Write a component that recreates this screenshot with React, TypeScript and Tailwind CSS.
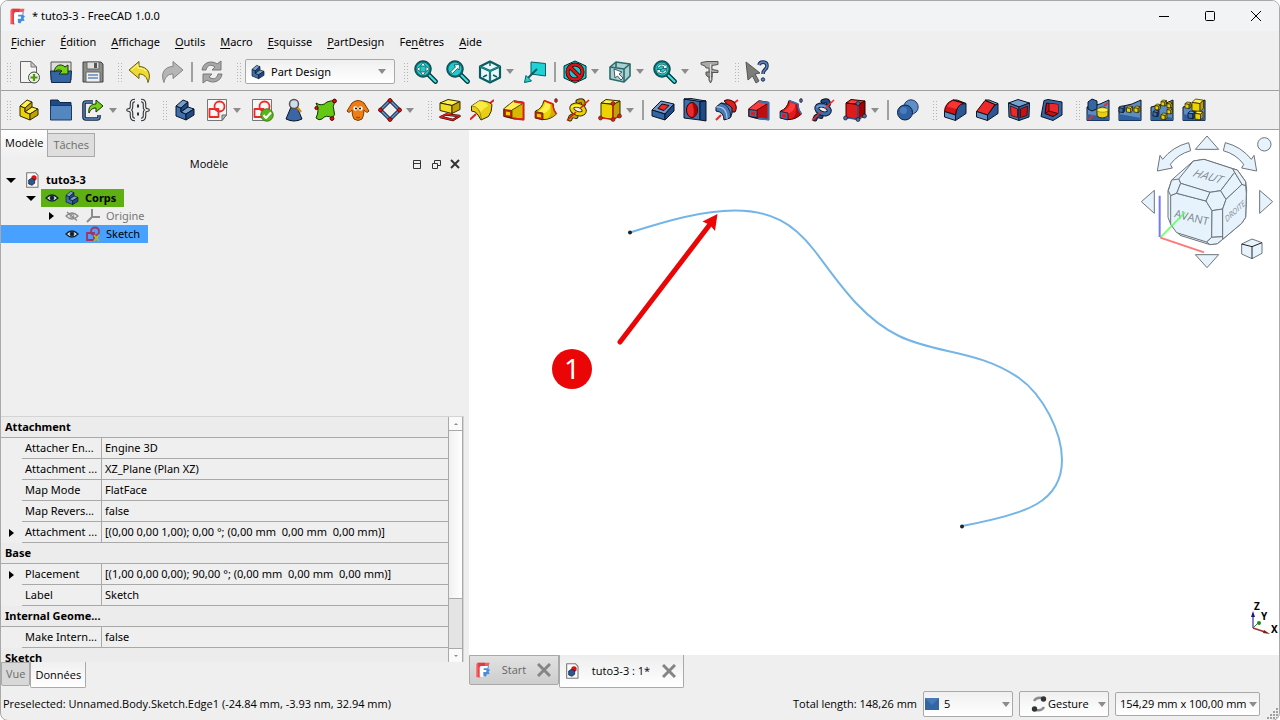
import React, { ReactNode } from "react";

type Palette = {
  light: string;
  mid: string;
  dark: string;
  line: string;
  accent: string;
};

const yellow: Palette = {
  light: "#fff04d",
  mid: "#edd400",
  dark: "#c4a000",
  line: "#302b00",
  accent: "#e01b1b",
};
const blue: Palette = {
  light: "#729fcf",
  mid: "#3d6fae",
  dark: "#204a87",
  line: "#0b1521",
  accent: "#ef2929",
};
const red: Palette = {
  light: "#ff3b3b",
  mid: "#e01b1b",
  dark: "#a40000",
  line: "#280000",
  accent: "#3d6fae",
};

const Svg = ({
  children,
  size = "w-6 h-6",
}: {
  children: ReactNode;
  size?: string;
}) => (
  <svg viewBox="0 0 24 24" className={`${size} shrink-0`} fill="none" strokeLinejoin="round" aria-hidden="true">
    {children}
  </svg>
);

/* ---------- shared shapes ---------- */

const Steps = ({ c, size }: { c: Palette; size?: string }) => (
  <Svg size={size}>
    <g stroke={c.line}>
      <path d="M3 8L8 10V14L13 16V22L3 18Z" fill={c.mid} />
      <path d="M3 8L10 2L15 4L8 10Z" fill={c.light} />
      <path d="M8 10L15 4V9L8 14Z" fill={c.dark} />
      <path d="M8 14L15 9L21 11L13 16Z" fill={c.light} />
      <path d="M13 16L21 11V17L13 22Z" fill={c.dark} />
    </g>
  </Svg>
);

const Cube = ({ x, y, s, c }: { x: number; y: number; s: number; c: Palette }) => (
  <g transform={`translate(${x} ${y}) scale(${s})`} stroke={c.line} strokeWidth={0.8 / s}>
    <path d="M0 3L3 0L10 1L7 4Z" fill={c.light} />
    <path d="M0 3L7 4V11L0 10Z" fill={c.mid} />
    <path d="M7 4L10 1V8L7 11Z" fill={c.dark} />
  </g>
);

const Sheet = () => (
  <>
    <path d="M2.500 1.500H21.500V17L17 22.500H2.500Z" fill="#f6f6f4" stroke="#777" />
    <path d="M21.500 17L17 22.500V17Z" fill="#bbb" stroke="#666" />
  </>
);

const SketchMarks = () => (
  <g stroke="#ef2929" strokeWidth="1.800">
    <circle cx="14.500" cy="8.500" r="5" />
    <rect x="4.500" y="11" width="9" height="8" />
  </g>
);

const Lens = () => (
  <>
    <path d="M14 14L21.500 21.500" stroke="#042a2a" strokeWidth="4.600" strokeLinecap="round" />
    <path d="M14 14L21.500 21.500" stroke="#34e0e2" strokeWidth="2.400" strokeLinecap="round" />
    <circle cx="9" cy="9" r="7.500" fill="#22c9cc" stroke="#0a6a70" strokeWidth="2" />
    <circle cx="9" cy="9" r="8.300" stroke="#042a2a" strokeWidth=".6" />
  </>
);

const Loft = ({ c }: { c: Palette }) => (
  <Svg>
    <path d="M2 11L12 3L21.500 4.500V21.500L9 20L2 18Z" fill={c.mid} stroke={c.line} strokeWidth="1.400" />
    <path d="M2 11L12 3L21.500 4.500L10 12Z" fill={c.light} />
    <path d="M10 12L20 6V20L10 19Z" fill={c.dark} opacity=".55" />
    <path d="M12 3.500L21.500 5V21.500L11 20.500" stroke={c.accent} strokeWidth="1.800" />
    <path d="M10 12L20 6" stroke={c.line} strokeWidth=".8" />
    <path d="M2 11.500L10 12.500V19.500L2 18.500Z" fill={c.accent} stroke={c.line} strokeWidth=".7" />
    <path d="M4 13.600L8 14.200V17.500L4 17Z" fill={c.mid} />
  </Svg>
);

const Pipe = ({ c }: { c: Palette }) => (
  <Svg>
    <path d="M1.500 13Q8 11 10 2.500L19 6Q19 12 22.500 16Q16 22 9 21.500L1.500 20Z" fill={c.mid} stroke={c.line} />
    <path d="M13 21Q19 16 16 6L19 6Q19 12 22.500 16Q18 20 13 21Z" fill={c.dark} opacity=".7" />
    <path d="M4 13.500Q10 11 11.500 4.500L16.500 6.500Q16 13 9 16Z" fill={c.light} />
    <path d="M10 2.500L19 6Q19 12 22.500 16" stroke={c.accent} strokeWidth="1.500" />
    <path d="M1 13.500L9 15V22L1 20Z" fill={c.accent} stroke={c.line} strokeWidth=".7" />
    <path d="M3 15.800L7 16.600V19.600L3 18.700Z" fill={c.mid} />
    <ellipse cx="22" cy="2.500" rx="1.400" ry="2" fill={c.accent} stroke={c.line} strokeWidth=".6" />
  </Svg>
);

const Helix = ({ c, axis }: { c: Palette; axis: string }) => (
  <Svg>
    <g strokeLinecap="round">
      <path d="M12 3.500Q17 1 17.500 6M4 21Q5 16.500 10 18.500" stroke={c.line} strokeWidth="5" />
      <path d="M12 3.500Q17 1 17.500 6M4 21Q5 16.500 10 18.500" stroke={c.dark} strokeWidth="3" />
      <ellipse cx="12" cy="11.500" rx="6.500" ry="4" transform="rotate(20 12 11.500)" stroke={c.line} strokeWidth="5" />
      <ellipse cx="12" cy="11.500" rx="6.500" ry="4" transform="rotate(20 12 11.500)" stroke={c.mid} strokeWidth="3.200" />
      <path d="M6 9Q10 6.500 15 9" stroke={c.light} strokeWidth="1.500" />
    </g>
    <path d="M1 22.500L10 14M14 10.500L23 2" stroke={axis} strokeWidth="1.600" />
  </Svg>
);

const Primitive = ({ c }: { c: Palette }) => (
  <Svg>
    <path d="M3 5L8 1.500L22 3L17 6.500Z" fill={c.light} stroke={c.line} />
    <path d="M3 5L15 6.500V21.500L3 19.500Z" fill={c.mid} stroke={c.line} />
    <path d="M15 6.500L22 3V18L15 21.500Z" fill={c.dark} stroke={c.line} />
    <path d="M3 20L15 21.500L21 18M15 21.500V6" stroke={c.accent} strokeWidth="1.200" />
    <g fill={c.accent} stroke={c.line} strokeWidth=".6">
      <circle cx="2.500" cy="20" r="2" />
      <circle cx="15" cy="21.500" r="2" />
      <circle cx="21.500" cy="18" r="2" />
      <circle cx="15" cy="5.500" r="2" />
    </g>
  </Svg>
);

const Ramp = ({ children }: { children: ReactNode }) => (
  <Svg>
    <path d="M1 9L14 6L23 2V22.500H1Z" fill="#5b8cc4" stroke="#0b1521" />
    <path d="M1 16L23 20V22.500H1Z" fill="#2f5f9e" />
    {children}
  </Svg>
);

/* ---------- icons ---------- */

const FreeCadLogo = ({ size = "w-4 h-4" }: { size?: string }) => (
  <Svg size={size}>
    <path d="M12 8L21 6L20 10L22.500 11.500L20.500 14.500L22 18L18 18.500L16 22L11 20Z" fill="#418fde" />
    <path d="M4 1H22L20.500 6H8V23H2V4Q2 2 4 1Z" fill="#ff585d" />
    <path d="M4 1H15V6H8V23H5V4Q5 2 4 1Z" fill="#cb333b" opacity=".7" />
    <path d="M9 6H19V9.500H13V12H17V15H12.500V22H7V8Z" fill="#fff" />
  </Svg>
);

const DocIcon = ({ size = "w-4 h-4" }: { size?: string }) => (
  <Svg size={size}>
    <path d="M4 1H17L21 5V23H4Z" fill="#fafafa" stroke="#777" strokeWidth="1.600" />
    <circle cx="15" cy="9" r="4" fill="#dd1111" />
    <path d="M7 12L11 9.500L16 11.500V17L12 20L7 18Z" fill="#2c5796" stroke="#0b1521" />
  </Svg>
);

const NewIcon = () => (
  <Svg>
    <path d="M3.500 1.500H14L19.500 7V22.500H3.500Z" fill="#f3f3f1" stroke="#666" />
    <path d="M14 1.500V7H19.500Z" fill="#ccc" stroke="#777" />
    <circle cx="17" cy="17.500" r="5.500" fill="#eee" stroke="#444" />
    <path d="M17 14V21M13.500 17.500H20.500" stroke="#4e9a06" strokeWidth="2.200" />
  </Svg>
);

const OpenIcon = () => (
  <Svg>
    <path d="M2 2H22V20H2Z" fill="#ddd" stroke="#555" />
    <path d="M1.500 11H22.500L21.500 22.500H2.500Z" fill="#3465a4" stroke="#102a4c" />
    <path d="M5 12C6 5 12 3 16 7L19 5V14H10L13 11C10 9 8 10 5 12Z" fill="#73d216" stroke="#173004" />
  </Svg>
);

const SaveIcon = () => (
  <Svg>
    <path d="M2 2H20L22 4V22H2Z" fill="#8b8d89" stroke="#3f403e" />
    <path d="M6 2H18V9H6Z" fill="#e0e0de" stroke="#666" />
    <path d="M13 3H16V8H13Z" fill="#555" />
    <path d="M5 12H19V22H5Z" fill="#f0f0f0" stroke="#666" />
    <path d="M7 15H17M7 18H17" stroke="#5d88c0" strokeWidth="1.400" />
  </Svg>
);

const UndoIcon = () => (
  <Svg>
    <path d="M1 10L11 1.500V6.500C19 6.500 24 13 20 22.500C19 17 16 14 11 14V18.500Z" fill="#f0d932" stroke="#6a5c00" />
    <path d="M3.500 10L10 4.500V8Q15 8 18 11" stroke="#fff8a0" />
  </Svg>
);

const RedoIcon = () => (
  <Svg>
    <path d="M23 10L13 1.500V6.500C5 6.500 0 13 4 22.500C5 17 8 14 13 14V18.500Z" fill="#b5b5b5" stroke="#858585" />
  </Svg>
);

const RefreshIcon = () => (
  <Svg>
    <g fill="#a8a8a8" stroke="#777">
      <path d="M2 10C3 2 12 0 17 4L21 1V10H12L15 7C11 4 7 5 6 10Z" />
      <path d="M22 14C21 22 12 24 7 20L3 23V14H12L9 17C13 20 17 19 18 14Z" />
    </g>
  </Svg>
);

const FitAllIcon = () => (
  <Svg>
    <Lens />
    <path d="M9 2.500L11.500 6H6.500ZM9 15.500L11.500 12H6.500ZM2.500 9L6 6.500V11.500ZM15.500 9L12 6.500V11.500Z" fill="#fff" stroke="#0b3a3c" strokeWidth=".7" />
  </Svg>
);

const FitSelectionIcon = () => (
  <Svg>
    <Lens />
    <path d="M4.500 12L9.500 7L8 5L13.500 4.500L13 10L11.500 8.500L6.500 13.500Z" fill="#fff" stroke="#0b3a3c" strokeWidth=".7" />
  </Svg>
);

const IsoIcon = () => (
  <Svg>
    <path d="M12 1.500L22 6.500V17.500L12 22.500L2 17.500V6.500Z" fill="#e8f7f7" stroke="#0a5c61" strokeWidth="2.200" />
    <path d="M2 6.500L12 11L22 6.500M12 11V22" stroke="#0a5c61" strokeWidth="2.200" />
    <path d="M2 6.500L12 11L22 6.500M12 11V22" stroke="#25b6ba" strokeWidth=".7" />
    <path d="M12 2V6M5 17L9 15M19 17L15 15" stroke="#0a5c61" strokeWidth="1.400" />
  </Svg>
);

const LinkViewIcon = () => (
  <Svg>
    <path d="M8 2L22.500 3.500V16L8 14Z" fill="#1ed3d6" stroke="#0a5c61" />
    <path d="M14 9L5 18" stroke="#0a5c61" strokeWidth="2" />
    <path d="M1.500 22.500L3 15.500L8.500 21Z" fill="#1ed3d6" stroke="#0a5c61" />
  </Svg>
);

const DrawStyleIcon = () => (
  <Svg>
    <path d="M12 1L23 6V18L12 23L1 18V6Z" fill="#16c6ca" stroke="#042a2a" />
    <circle cx="12" cy="12" r="7.500" stroke="#280000" strokeWidth="4" />
    <path d="M7 7L17 17" stroke="#280000" strokeWidth="4" />
    <circle cx="12" cy="12" r="7.500" stroke="#d81414" strokeWidth="2.600" />
    <path d="M7 7L17 17" stroke="#d81414" strokeWidth="2.600" />
  </Svg>
);

const BoxSelectIcon = () => (
  <Svg>
    <path d="M2 7L8 2L22 4V16L16 22L2 19Z" fill="#a8d0d0" stroke="#2b6a6a" strokeWidth="1.600" />
    <path d="M2 7L16 9L22 4M16 9V22M8 2V7" stroke="#2b6a6a" strokeWidth="1.600" />
    <path d="M6 9L14 12L11 14L15 18L13 20L9.500 16L7 18Z" fill="#fff" stroke="#234" strokeWidth=".8" />
  </Svg>
);

const SyncViewIcon = () => (
  <Svg>
    <Lens />
    <path d="M4 8C5 4 10 3 12 5.500L14 4V8.500H9.500L11 7C8 5 7 6 6 8ZM14 10C13 14 8 15 6 12.500L4 14V9.500H8.500L7 11C10 13 11 12 12 10Z" fill="#e0fafa" stroke="#0b3a3c" strokeWidth=".7" />
  </Svg>
);

const MeasureIcon = () => (
  <Svg>
    <path d="M3 2.500L9 1.500H20V4.500L14 5.500V9.500L20 10.500V12.500H14V20L12.500 23L11 20V8H8L7 6L3 4.500Z" fill="#a9aba6" stroke="#555" />
    <path d="M8 12H14V17H10L8 15Z" fill="#8b8d89" stroke="#555" />
    <path d="M12.500 4V20" stroke="#ddd" />
  </Svg>
);

const WhatsThisIcon = () => (
  <Svg>
    <path d="M1 2L15 13L10 14L14 21L11 23L7.500 16L3 20Z" fill="#7b7d79" stroke="#555" />
    <path d="M14 5C15 1 22 1 22 6C22 10 18 9 18 14" stroke="#1c2f52" strokeWidth="3.600" />
    <path d="M14 5C15 1 22 1 22 6C22 10 18 9 18 14" stroke="#5f83ba" strokeWidth="1.600" />
    <circle cx="18" cy="19.500" r="1.700" fill="#5f83ba" stroke="#1c2f52" />
  </Svg>
);

const GroupIcon = () => (
  <Svg>
    <path d="M1.500 2H9L11 4.500H22V9H1.500Z" fill="#204a87" stroke="#102a4c" />
    <path d="M1.500 7.500H22.500V22H1.500Z" fill="#5486c0" stroke="#183a69" />
  </Svg>
);

const LinkIcon = () => (
  <Svg>
    <path d="M12 4H5Q3 4 3 6V19Q3 21 5 21H16Q18 21 18 19V17" stroke="#122438" strokeWidth="3.600" />
    <path d="M12 4H5Q3 4 3 6V19Q3 21 5 21H16Q18 21 18 19V17" stroke="#5a87bd" strokeWidth="1.400" />
    <path d="M8 15C7 9 10 6 15 6V2L22 8L15 14V10C12 10 10 11 8 15Z" fill="#73d216" stroke="#173004" />
  </Svg>
);

const VarSetIcon = () => (
  <Svg>
    <g stroke="#2e3436" strokeWidth="3.600">
      <path d="M9 2.500Q5.500 2.500 5.500 6V9Q5.500 12 2 12Q5.500 12 5.500 15V18Q5.500 21.500 9 21.500" />
      <path d="M15 2.500Q18.500 2.500 18.500 6V9Q18.500 12 22 12Q18.500 12 18.500 15V18Q18.500 21.500 15 21.500" />
    </g>
    <g stroke="#eee" strokeWidth="1.400">
      <path d="M9 2.500Q5.500 2.500 5.500 6V9Q5.500 12 2 12Q5.500 12 5.500 15V18Q5.500 21.500 9 21.500" />
      <path d="M15 2.500Q18.500 2.500 18.500 6V9Q18.500 12 22 12Q18.500 12 18.500 15V18Q18.500 21.500 15 21.500" />
    </g>
    <path d="M12 6.500V9.500M12 14.500V17.500" stroke="#2e3436" strokeWidth="2" />
  </Svg>
);

const NewSketchIcon = () => (
  <Svg>
    <Sheet />
    <SketchMarks />
  </Svg>
);

const ValidateSketchIcon = () => (
  <Svg>
    <Sheet />
    <SketchMarks />
    <circle cx="17" cy="17" r="6.200" fill="#5ab51c" stroke="#3b7d0d" />
    <path d="M13.500 17L16 20L21 14.500" stroke="#fff" strokeWidth="2" />
  </Svg>
);

const CheckGeometryIcon = () => (
  <Svg>
    <path d="M9 9H15L20 21Q12 25 4 21Z" fill="#3a66a3" stroke="#0b1521" />
    <path d="M15 9L19 14" stroke="#d08a10" strokeWidth="2.200" />
    <circle cx="12" cy="6" r="4.500" fill="#cfdcea" stroke="#555" strokeWidth="1.500" />
  </Svg>
);

const BinderIcon = () => (
  <Svg>
    <path d="M2 5Q8 9 13 4Q18 2 21 3Q18 9 20 13Q22 17 18 20Q12 16 8 21Q5 23 2 20Q6 12 2 5Z" fill="#62c812" stroke="#173004" />
    <g fill="#d81414" stroke="#500">
      <circle cx="2.500" cy="10" r="1.600" />
      <circle cx="20.500" cy="3" r="1.900" />
      <circle cx="18" cy="20.500" r="1.900" />
    </g>
  </Svg>
);

const CloneIcon = () => (
  <Svg>
    <path d="M6 5Q12 0 18 5L23 13Q21 16 18 12Q18 18 16 21Q12 24 8 21Q6 18 6 12Q3 16 1 13Z" fill="#f07d14" stroke="#7a3c02" />
    <circle cx="9.500" cy="10.500" r="2.200" fill="#fff" />
    <circle cx="14.500" cy="10.500" r="2.200" fill="#fff" />
    <circle cx="10" cy="10.500" r="1" fill="#000" />
    <circle cx="14" cy="10.500" r="1" fill="#000" />
    <path d="M10 19Q12 21 14 19" stroke="#7a3c02" />
  </Svg>
);

const DatumIcon = () => (
  <Svg>
    <path d="M12 2.500L21.500 12L12 21.500L2.500 12Z" stroke="#0b1521" strokeWidth="3.600" />
    <path d="M12 2.500L21.500 12L12 21.500L2.500 12Z" stroke="#5a8ac4" strokeWidth="2" />
    <g fill="#d81414" stroke="#500" strokeWidth=".7">
      <circle cx="12" cy="2.500" r="2" />
      <circle cx="21.500" cy="12" r="2" />
      <circle cx="12" cy="21.500" r="2" />
      <circle cx="2.500" cy="12" r="2" />
    </g>
  </Svg>
);

const PadIcon = () => (
  <Svg>
    <path d="M2.500 19L8 16.500L21.500 18L15 22Z" stroke="#280000" strokeWidth="2.400" />
    <path d="M2.500 19L8 16.500L21.500 18L15 22Z" stroke="#e01b1b" strokeWidth="1.400" />
    <path d="M2 5L10 1.500L22 3.500L14 7.500Z" fill="#fff04d" stroke="#302b00" />
    <path d="M2 5L14 7.500V15.500L2 12.500Z" fill="#f3dc24" stroke="#302b00" />
    <path d="M14 7.500L22 3.500V11.500L14 15.500Z" fill="#c4a000" stroke="#302b00" />
  </Svg>
);

const RevolutionIcon = () => (
  <Svg>
    <path d="M0 21.500L6 16M19 6L24 2" stroke="#e01b1b" strokeWidth="2" />
    <path d="M1.500 8L9 3Q17 2 22 6.500Q22 14 18.500 18.500L11 22L8 17Q6 13 1.500 13Z" fill="#e8cf15" stroke="#302b00" />
    <path d="M1.500 8L9 3Q15 3 18.500 8Q15 9 11 14Q8 9 1.500 8Z" fill="#fff04d" opacity=".8" />
    <path d="M1.500 8Q10 8 11.500 21.500" stroke="#8a7600" strokeWidth=".8" />
  </Svg>
);

const PocketIcon = () => (
  <Svg>
    <path d="M1 12L10 3L23 6L14 16Z" fill="#6b98cd" stroke="#0b1521" />
    <path d="M1 12L14 16V22L1 18Z" fill="#3465a4" stroke="#0b1521" />
    <path d="M14 16L23 6V13L14 22Z" fill="#204a87" stroke="#0b1521" />
    <path d="M7 10.500L11 6L18 7.500L13 12.500Z" fill="#ef2929" stroke="#280000" />
  </Svg>
);

const HoleIcon = () => (
  <Svg>
    <path d="M1 1L17 3V22L1 20Z" fill="#3f70ae" stroke="#0b1521" />
    <path d="M1 1L8 0.500L23 3L17 3.500Z" fill="#729fcf" stroke="#0b1521" />
    <path d="M17 3.500L23 3V23L17 22Z" fill="#204a87" stroke="#0b1521" />
    <ellipse cx="9" cy="12" rx="5.500" ry="7.500" fill="#ef2929" stroke="#280000" />
    <path d="M9 4.500Q14.500 5 14.500 12Q14 18 10 19.500Q12 12 9 4.500Z" fill="#a40000" />
  </Svg>
);

const GrooveIcon = () => (
  <Svg>
    <path d="M1 22L6 17M19 5L23 2" stroke="#ef2929" strokeWidth="2" />
    <path d="M9 3Q13 0 19 4Q23 9 20 14L15 14Q16 8 9 3Z" fill="#e01b1b" stroke="#280000" />
    <path d="M1 9L6 5Q13 5 17 10Q18 16 15 20L9 22Q9 14 1 13Z" fill="#4a7ab5" stroke="#0b1521" />
    <path d="M1 9Q12 8 12 21" stroke="#a9c6e8" strokeWidth="1.200" />
    <path d="M6 5Q15 7 16 19" stroke="#0b1521" strokeWidth=".8" />
  </Svg>
);

const BooleanIcon = () => (
  <Svg>
    <circle cx="15" cy="9" r="7.200" fill="#5f8fc6" stroke="#1b3c68" />
    <circle cx="9" cy="14.500" r="7.500" fill="#2f62a3" stroke="#0b1f3a" />
    <circle cx="7.500" cy="12.500" r="3.500" fill="#4a7dbb" />
  </Svg>
);

const FilletIcon = () => (
  <Svg>
    <path d="M12.500 17Q13 8 20 5L23 5.500V15.500L12.500 22.500Z" fill="#2c5796" stroke="#0b1521" />
    <path d="M10 2H14L23 5.500L20 6Z" fill="#729fcf" stroke="#0b1521" />
    <path d="M1.500 13.500Q2 5 10 2L20.500 5Q13 8 12.500 17Z" fill="#d41414" stroke="#280000" />
    <path d="M4 8.500Q6 4.500 10 3L19 5.500Q15 7 13.500 11Z" fill="#ff3b3b" opacity=".8" />
    <path d="M1.500 13.500L12.500 17V22.500L1.500 19Z" fill="#5f8fc6" stroke="#0b1521" />
  </Svg>
);

const ChamferIcon = () => (
  <Svg>
    <path d="M12.500 17L20 7L23 5.500V15.500L12.500 22.500Z" fill="#2c5796" stroke="#0b1521" />
    <path d="M10 2H14L23 5.500L20 7Z" fill="#729fcf" stroke="#0b1521" />
    <path d="M1.500 13.500L10 2.500L20 6.500L12.500 17Z" fill="#ef2929" stroke="#280000" />
    <path d="M1.500 13.500L12.500 17V22.500L1.500 19Z" fill="#5f8fc6" stroke="#0b1521" />
  </Svg>
);

const DraftIcon = () => (
  <Svg>
    <path d="M1.500 5L11 1.500L22.500 5L12 9Z" fill="#729fcf" stroke="#0b1521" />
    <path d="M1.500 5L12 9V22.500L2 19Z" fill="#4a7ab5" stroke="#0b1521" />
    <path d="M12 9L22.500 5L22 19L12 22.500Z" fill="#3465a4" stroke="#0b1521" />
    <path d="M3.500 8L10.500 11V19.500L4 17.500Z" fill="#ef2929" stroke="#280000" strokeWidth=".7" />
    <path d="M13.500 11L20.500 8L20 17.500L13.500 19.500Z" fill="#c41212" stroke="#280000" strokeWidth=".7" />
  </Svg>
);

const ThicknessIcon = () => (
  <Svg>
    <path d="M5 2.500L9 1.500L23 4V17L14 22.500L2 18.500Z" fill="#3465a4" stroke="#0b1521" />
    <path d="M7.500 5L19 6.500V15.500L14 18.500L6 15.500Z" fill="#c41212" stroke="#280000" />
    <path d="M10 5.500L19 6.500V15.500L10 13Z" fill="#ef2929" />
    <path d="M10 5.500V13L19 15.500M10 13L6 15.500" stroke="#280000" strokeWidth=".8" />
  </Svg>
);

const MirroredIcon = () => (
  <Ramp>
    <path d="M2 4L6 1L11 3V11L6 13L2 11Z" fill="#3465a4" stroke="#0b1521" />
    <path d="M3 22L7 17M18 8L22 5" stroke="#ef2929" strokeWidth="2" />
    <path d="M11 12Q16 6 22 12V18Q16 22 11 18Z" fill="#e8cf15" stroke="#302b00" />
    <ellipse cx="16.500" cy="12" rx="5.500" ry="2.200" fill="#fff04d" stroke="#8a7600" strokeWidth=".6" />
  </Ramp>
);

const LinearPatternIcon = () => (
  <Ramp>
    <Cube x={1} y={8} s={0.6} c={blue} />
    <Cube x={8.500} y={8} s={0.6} c={yellow} />
    <Cube x={16} y={8} s={0.6} c={yellow} />
  </Ramp>
);

const PolarPatternIcon = () => (
  <Ramp>
    <Cube x={3} y={12} s={0.6} c={blue} />
    <Cube x={5} y={6} s={0.55} c={yellow} />
    <Cube x={11} y={2} s={0.55} c={yellow} />
    <Cube x={17} y={4} s={0.55} c={yellow} />
    <Cube x={17} y={10} s={0.55} c={yellow} />
    <Cube x={11} y={15} s={0.6} c={yellow} />
  </Ramp>
);

const MultiTransformIcon = () => (
  <Ramp>
    <Cube x={10} y={1} s={1.150} c={yellow} />
    <Cube x={3} y={4} s={0.6} c={yellow} />
    <Cube x={6} y={13} s={0.7} c={blue} />
    <Cube x={13} y={13} s={0.8} c={yellow} />
  </Ramp>
);

/* ---------- toolbar parts ---------- */

const Grip = () => (
  <span className="ml-2 mr-px w-1.5 h-5 shrink-0 bg-[radial-gradient(#b4b4b4_35%,transparent_40%)] bg-size-[3px_3px]" />
);

const Separator = () => (
  <span className="mx-[3px] w-0.5 h-5 shrink-0 bg-[#a0a0a0]" />
);

const Arrow = () => (
  <span className="block w-0 h-0 border-x-4 border-x-transparent border-t-[5px] border-t-[#8c8c8c]" />
);

const Tool = ({
  label,
  menu,
  children,
}: {
  label: string;
  menu?: boolean;
  children: ReactNode;
}) => (
  <>
    <button type="button" aria-label={label} className="w-8 h-8 shrink-0 grid place-items-center">
      {children}
    </button>
    {menu && (
      <button type="button" aria-label={`${label} menu`} className="w-[13px] h-8 shrink-0 flex items-center">
        <Arrow />
      </button>
    )}
  </>
);

const menus = [
  ["", "F", "ichier"],
  ["", "É", "dition"],
  ["", "A", "ffichage"],
  ["", "O", "utils"],
  ["", "M", "acro"],
  ["", "E", "squisse"],
  ["", "P", "artDesign"],
  ["Fe", "n", "êtres"],
  ["", "A", "ide"],
];

const TitleBar = () => (
  <header className="flex items-center h-[30px] pl-2 bg-[#f2f3f5]">
    <FreeCadLogo size="w-[17px] h-[17px]" />
    <h1 className="ml-1.5 grow">* tuto3-3 - FreeCAD 1.0.0</h1>
    <div className="flex text-black">
      <button type="button" aria-label="Réduire" className="w-[46px] h-7 grid place-items-center">
        <svg viewBox="0 0 12 12" className="w-3 h-3" stroke="currentColor">
          <path d="M1 6.500H11" />
        </svg>
      </button>
      <button type="button" aria-label="Agrandir" className="w-[46px] h-7 grid place-items-center">
        <svg viewBox="0 0 12 12" className="w-3 h-3" stroke="currentColor" fill="none">
          <rect x="1.500" y="1.500" width="9" height="9" rx="1" />
        </svg>
      </button>
      <button type="button" aria-label="Fermer" className="w-[46px] h-7 grid place-items-center">
        <svg viewBox="0 0 12 12" className="w-3 h-3" stroke="currentColor">
          <path d="M1 1L11 11M11 1L1 11" />
        </svg>
      </button>
    </div>
  </header>
);

const MenuBar = () => (
  <nav className="h-[22px] flex items-center gap-[15px] pl-2.5">
    {menus.map(([before, key, after]) => (
      <a key={before + key + after} href="#">
        {before}
        <span className="underline underline-offset-2">{key}</span>
        {after}
      </a>
    ))}
  </nav>
);

const MainToolbar = () => (
  <div className="h-[38px] flex items-center -ml-[3px] border-b border-[#a0a0a0]">
    <Grip />
    <Tool label="Nouveau"><NewIcon /></Tool>
    <Tool label="Ouvrir"><OpenIcon /></Tool>
    <Tool label="Enregistrer"><SaveIcon /></Tool>
    <Grip />
    <Tool label="Annuler"><UndoIcon /></Tool>
    <Tool label="Rétablir"><RedoIcon /></Tool>
    <Separator />
    <Tool label="Rafraîchir"><RefreshIcon /></Tool>
    <Grip />
    <div className="relative ml-0.5 flex items-center w-[150px] h-[25px] pl-1 rounded-xs border border-[#a9a9a9] bg-linear-to-b from-[#f0f0f0] to-white">
      <Steps c={blue} size="w-4 h-4" />
      <select aria-label="Atelier" className="grow h-full pl-[5px] appearance-none bg-transparent">
        <option>Part Design</option>
      </select>
      <span className="absolute right-2 pointer-events-none">
        <Arrow />
      </span>
    </div>
    <Grip />
    <Tool label="Tout afficher"><FitAllIcon /></Tool>
    <Tool label="Zoom sur la sélection"><FitSelectionIcon /></Tool>
    <Tool label="Vue isométrique" menu><IsoIcon /></Tool>
    <Tool label="Aller à l'objet lié"><LinkViewIcon /></Tool>
    <Separator />
    <Tool label="Style de représentation" menu><DrawStyleIcon /></Tool>
    <Tool label="Sélection" menu><BoxSelectIcon /></Tool>
    <Tool label="Synchroniser la vue" menu><SyncViewIcon /></Tool>
    <Tool label="Mesurer"><MeasureIcon /></Tool>
    <Grip />
    <Tool label="Qu'est-ce que c'est ?"><WhatsThisIcon /></Tool>
  </div>
);

const PartDesignToolbar = () => (
  <div className="h-[39px] flex items-center -ml-[3px] border-b border-[#a0a0a0]">
    <Grip />
    <Tool label="Pièce"><Steps c={yellow} /></Tool>
    <Tool label="Groupe"><GroupIcon /></Tool>
    <Tool label="Lien" menu><LinkIcon /></Tool>
    <Tool label="Variables"><VarSetIcon /></Tool>
    <Grip />
    <Tool label="Corps"><Steps c={blue} /></Tool>
    <Tool label="Nouvelle esquisse" menu><NewSketchIcon /></Tool>
    <Tool label="Valider l'esquisse"><ValidateSketchIcon /></Tool>
    <Tool label="Vérifier la géométrie"><CheckGeometryIcon /></Tool>
    <Tool label="Forme liée"><BinderIcon /></Tool>
    <Tool label="Clone"><CloneIcon /></Tool>
    <Tool label="Référence" menu><DatumIcon /></Tool>
    <Grip />
    <Tool label="Protrusion"><PadIcon /></Tool>
    <Tool label="Révolution"><RevolutionIcon /></Tool>
    <Tool label="Lissage additif"><Loft c={yellow} /></Tool>
    <Tool label="Balayage additif"><Pipe c={yellow} /></Tool>
    <Tool label="Hélice additive"><Helix c={yellow} axis="#e01b1b" /></Tool>
    <Tool label="Primitive additive" menu><Primitive c={yellow} /></Tool>
    <Separator />
    <Tool label="Cavité"><PocketIcon /></Tool>
    <Tool label="Perçage"><HoleIcon /></Tool>
    <Tool label="Rainure"><GrooveIcon /></Tool>
    <Tool label="Lissage soustractif"><Loft c={red} /></Tool>
    <Tool label="Balayage soustractif"><Pipe c={red} /></Tool>
    <Tool label="Hélice soustractive"><Helix c={blue} axis="#ef2929" /></Tool>
    <Tool label="Primitive soustractive" menu><Primitive c={red} /></Tool>
    <Separator />
    <Tool label="Opération booléenne"><BooleanIcon /></Tool>
    <Grip />
    <Tool label="Congé"><FilletIcon /></Tool>
    <Tool label="Chanfrein"><ChamferIcon /></Tool>
    <Tool label="Dépouille"><DraftIcon /></Tool>
    <Tool label="Épaisseur"><ThicknessIcon /></Tool>
    <Grip />
    <Tool label="Symétrie"><MirroredIcon /></Tool>
    <Tool label="Répétition linéaire"><LinearPatternIcon /></Tool>
    <Tool label="Répétition circulaire"><PolarPatternIcon /></Tool>
    <Tool label="Transformation multiple"><MultiTransformIcon /></Tool>
  </div>
);

/* ---------- model panel ---------- */

const Eye = ({ off }: { off?: boolean }) => (
  <svg viewBox="0 0 14 10" className="w-3.5 h-2.5 shrink-0" fill="none" stroke={off ? "#8a8a8a" : "#10222e"} aria-hidden="true">
    <path d="M1 5Q7 -1 13 5Q7 11 1 5Z" fill={off ? "none" : "#e8eef2"} strokeWidth="1.300" />
    <circle cx="7" cy="5" r="1.900" fill={off ? "none" : "#10222e"} />
    {off && <path d="M2 1L12 9.500" strokeWidth="1.400" />}
  </svg>
);

const Down = () => (
  <span className="w-0 h-0 border-x-[5px] border-x-transparent border-t-[5px] border-t-black" />
);

const Right = () => (
  <span className="inline-block w-0 h-0 border-y-4 border-y-transparent border-l-[5px] border-l-black" />
);

const Tree = () => (
  <ul className="grow">
    <li className="flex items-center h-[18px] pl-[5px]">
      <Down />
      <span className="ml-2 mr-1.5"><DocIcon /></span>
      <b>tuto3-3</b>
    </li>
    <li className="flex items-center h-[18px] pl-[25px]">
      <Down />
      <span className="ml-[5px] h-full flex items-center pl-1 pr-2 bg-[#5eb012]">
        <Eye />
        <span className="mx-[5px]"><Steps c={blue} size="w-4 h-4" /></span>
        <b>Corps</b>
      </span>
    </li>
    <li className="flex items-center h-[18px] pl-12 text-[#777]">
      <Right />
      <span className="ml-[11px]"><Eye off /></span>
      <svg viewBox="0 0 16 16" className="ml-1.5 mr-[5px] w-4 h-4" stroke="#8c8c8c" strokeWidth="2" fill="none" aria-hidden="true">
        <path d="M7 1V9H15M7 9L2 14" />
      </svg>
      Origine
    </li>
    <li className="flex">
      <span className="flex items-center h-[18px] pl-16 pr-2 bg-[#48a0ff]">
        <Eye />
        <svg viewBox="0 0 16 16" className="ml-1.5 mr-[5px] w-4 h-4" stroke="#a8325a" strokeWidth="1.800" fill="none" aria-hidden="true">
          <circle cx="10" cy="5.500" r="4" />
          <path d="M2 7H9V14H2Z" />
          <path d="M9 9L14 15M14 9L9 15" stroke="#b5b52a" />
        </svg>
        Sketch
      </span>
    </li>
  </ul>
);

const properties = [
  {
    group: "Attachment",
    rows: [
      { name: "Attacher En...", value: "Engine 3D" },
      { name: "Attachment ...", value: "XZ_Plane (Plan XZ)" },
      { name: "Map Mode", value: "FlatFace" },
      { name: "Map Revers...", value: "false" },
      {
        name: "Attachment ...",
        value: "[(0,00 0,00 1,00); 0,00 °; (0,00 mm  0,00 mm  0,00 mm)]",
        open: true,
      },
    ],
  },
  {
    group: "Base",
    rows: [
      {
        name: "Placement",
        value: "[(1,00 0,00 0,00); 90,00 °; (0,00 mm  0,00 mm  0,00 mm)]",
        open: true,
      },
      { name: "Label", value: "Sketch" },
    ],
  },
  { group: "Internal Geome...", rows: [{ name: "Make Intern...", value: "false" }] },
  { group: "Sketch", rows: [] },
];

const PropertyEditor = () => (
  <div className="flex h-[246px] mr-[5px] overflow-hidden border-t border-r border-[#d4d4d4]">
    <div className="grow overflow-hidden">
      <table className="w-full table-fixed border-separate border-spacing-0 whitespace-pre">
        <colgroup>
          <col className="w-[21px]" />
          <col className="w-20" />
          <col />
        </colgroup>
        {properties.map(({ group, rows }) => (
          <tbody key={group}>
            <tr className="h-[21px]">
              <th colSpan={3} className="p-0 pl-1 text-left leading-5 bg-[#ececec] border-b border-[#a9a9a9]">
                {group}
              </th>
            </tr>
            {rows.map(({ name, value, open }, i) => (
              <tr key={i} className="h-[21px]">
                <td className="p-0 pl-2 leading-5">{open && <Right />}</td>
                <td className="p-0 pl-[3px] leading-5 border-b border-r border-[#a9a9a9]">{name}</td>
                <td className="p-0 pl-[3px] leading-5 border-b border-[#a9a9a9]">{value}</td>
              </tr>
            ))}
          </tbody>
        ))}
      </table>
    </div>
    <div className="w-[15px] shrink-0 flex flex-col border-x border-[#a9a9a9] bg-[#e4e4e4]">
      <button type="button" aria-label="Défiler vers le haut" className="h-3.5 grid place-items-center bg-[#fafafa] border-b border-[#a9a9a9]">
        <span className="w-0 h-0 border-x-2 border-x-transparent border-b-2 border-b-[#8c8c8c]" />
      </button>
      <div className="h-[168px] bg-linear-to-r from-[#f0f0f0] to-white border-b border-[#a9a9a9]" />
      <button type="button" aria-label="Défiler vers le bas" className="mt-auto h-3.5 grid place-items-center bg-[#fafafa] border-t border-[#a9a9a9]">
        <span className="w-0 h-0 border-x-2 border-x-transparent border-t-2 border-t-[#8c8c8c]" />
      </button>
    </div>
  </div>
);

const ModelPanel = () => (
  <aside className="w-[468px] shrink-0 flex flex-col">
    <div className="flex h-[27px] font-['Open_Sans',sans-serif]">
      <button type="button" className="h-[27px] px-1 pb-0.5 bg-linear-to-b from-white to-[#efefef] border-r border-[#a9a9a9]">
        Modèle
      </button>
      <button type="button" className="mt-[3px] h-6 px-[5px] bg-[#dedede] text-[#6c6c6c] border border-l-0 border-[#a9a9a9]">
        Tâches
      </button>
    </div>
    <div className="flex items-center h-3.5 pr-2">
      <h2 className="grow pl-1.5 text-center font-['Open_Sans',sans-serif]">Modèle</h2>
      <div className="flex gap-[7px] text-[#333]">
        <button type="button" aria-label="Replier">
          <svg viewBox="0 0 12 12" className="w-3 h-3" stroke="currentColor" fill="none">
            <path d="M2.500 2.500H9.500V10.500H2.500ZM2.500 5.500H9.500" />
          </svg>
        </button>
        <button type="button" aria-label="Détacher">
          <svg viewBox="0 0 12 12" className="w-3 h-3" stroke="currentColor" fill="none">
            <path d="M4.500 5V2.500H10.500V7.500H7.500M2.500 5.500H7.500V10.500H2.500Z" />
          </svg>
        </button>
        <button type="button" aria-label="Fermer le panneau">
          <svg viewBox="0 0 12 12" className="w-3 h-3" stroke="currentColor" strokeWidth="2">
            <path d="M2 2L10 10M10 2L2 10" />
          </svg>
        </button>
      </div>
    </div>
    <Tree />
    <PropertyEditor />
    <div className="flex h-[26px] font-['Open_Sans',sans-serif]">
      <button type="button" className="h-6 px-1 rounded-b-xs bg-[#d8d8d8] text-[#6c6c6c] border border-[#a9a9a9]">
        Vue
      </button>
      <button type="button" className="h-[26px] px-1 rounded-b-xs bg-linear-to-b from-[#f0f0f0] to-white border border-t-0 border-[#a9a9a9]">
        Données
      </button>
    </div>
  </aside>
);

/* ---------- 3D view ---------- */

const NavigationCube = () => (
  <svg
    viewBox="0 0 447 435"
    className="absolute top-0 right-0 w-[149px] h-[145px]"
    fill="#e6f3fd"
    stroke="#6d747a"
    strokeWidth="3"
    strokeLinejoin="round"
  >
    <path d="M196 58L231 18L266 58Z" />
    <path d="M34 215L73 181V250Z" />
    <path d="M428 215L389 181V250Z" />
    <path d="M196 374H266L231 413Z" />
    <circle cx="403" cy="43" r="20" />
    <path d="M176 38L182 62Q143 73 121 103L127 114L82 123L90 76L98 88Q128 50 176 38Z" />
    <path d="M286 38L280 62Q319 73 341 103L335 114L380 123L372 76L364 88Q334 50 286 38Z" />
    <path d="M335 342L366 327L396 338V370L366 386L335 372Z" />
    <path d="M335 342L366 350L396 338M366 350V386" stroke="#222" />
    <path d="M190 93L222 88L308 116L322 120L347 155L350 180L347 262L335 280L278 328L262 341L240 344L150 316L122 283L114 262V182L125 150Z" />
    <path d="M190 93L222 88L308 116L314 127L272 182L240 187L152 160L146 147Z" />
    <path d="M146 147L152 160L140 190L122 197L115 182L125 150Z" />
    <path d="M140 190L228 213L246 242L245 322L230 336L140 308L122 283V197Z" />
    <path d="M152 160L240 187L228 213L140 190Z" />
    <path d="M240 187L272 182L288 208L278 237L246 242L228 213Z" />
    <path d="M272 182L314 127L336 163L288 208Z" />
    <path d="M246 242L278 237V320L245 322Z" />
    <path d="M288 208L336 163L347 167L349 190L347 262L335 280L278 328V237Z" />
    <path d="M308 116L322 120L347 155V167L336 163L314 127Z" />
    <path d="M245 322L278 320V328L262 341L240 344L230 336Z" />
    <g fill="#7d858c" stroke="none" textAnchor="middle" fontFamily="Open Sans">
      <text transform="translate(227 149) rotate(15) skewX(-25)" fontSize="33">HAUT</text>
      <text transform="translate(182 274) rotate(14)" fontSize="33">AVANT</text>
      <text transform="translate(318 251) rotate(-43) skewX(-25)" fontSize="22">DROITE</text>
    </g>
    <g fill="none" strokeWidth="6">
      <path d="M91 323L165 247" stroke="#4cff4c" opacity=".75" />
      <path d="M91 323L222 367" stroke="#ff7878" />
      <path d="M89 197V321" stroke="#7878f8" />
    </g>
  </svg>
);

const AxisCross = () => (
  <svg viewBox="0 0 30 40" className="absolute bottom-4 right-0 w-[30px] h-10 overflow-visible text-[10px] font-bold">
    <path d="M4 29V16" stroke="#5a5ab8" strokeWidth="1.500" />
    <path d="M4 12L6 18H2Z" fill="#1a1a80" />
    <path d="M4 29L10 23" stroke="#1e8a1e" />
    <circle cx="10" cy="24" r="2" fill="#1e8a1e" />
    <path d="M4 29L16 33" stroke="#a03030" strokeWidth="1.500" />
    <path d="M21 35L14 34L15 31Z" fill="#801a1a" />
    <text x="5" y="11">Z</text>
    <text x="12" y="21">Y</text>
    <text x="22" y="34">X</text>
  </svg>
);

const View3D = () => (
  <div className="relative grow bg-white overflow-hidden">
    <svg viewBox="0 0 810 525" className="w-full h-full" fill="none">
      <path
        d="M161 102.500C197 91 233 80.500 266 80.500C302 80.500 324 93 345 120C364 144 390 187 430 206C467 224 510 220 550 248C574 265 593 302 593 330C593 372 558 384 493 396"
        stroke="#74b5e8"
        strokeWidth="2"
      />
      <circle cx="161" cy="102.500" r="2" fill="#222" />
      <circle cx="493" cy="396.500" r="2" fill="#222" />
      <path d="M151 212L242 93" stroke="#ea0606" strokeWidth="5" strokeLinecap="round" />
      <path d="M248.500 84L246 101L241 95L233.500 91.500Z" fill="#ea0606" />
      <circle cx="103" cy="239" r="20" fill="#ea0606" />
      <text x="103" y="249" fill="#fff" textAnchor="middle" className="text-[28px]">
        1
      </text>
    </svg>
    <NavigationCube />
    <AxisCross />
  </div>
);

const CloseMark = () => (
  <svg viewBox="0 0 14 14" className="w-3.5 h-3.5" stroke="#858585" strokeWidth="3" aria-hidden="true">
    <path d="M1 1L13 13M13 1L1 13" />
  </svg>
);

const DocumentTabs = () => (
  <div className="flex h-[33px] font-['Open_Sans',sans-serif]">
    <div className="flex items-center h-[30px] w-[90px] pl-[5px] pr-[7px] rounded-b-xs bg-linear-to-b from-[#e2e2e2] to-[#cdcdcd] text-[#666] border border-[#a9a9a9]">
      <FreeCadLogo />
      <button type="button" className="grow">Start</button>
      <button type="button" aria-label="Fermer Start"><CloseMark /></button>
    </div>
    <div className="flex items-center h-[33px] w-[125px] pl-1 pr-[7px] rounded-b-xs bg-linear-to-b from-[#ededed] to-white border border-t-0 border-[#a9a9a9]">
      <DocIcon />
      <button type="button" className="grow">tuto3-3 : 1*</button>
      <button type="button" aria-label="Fermer tuto3-3"><CloseMark /></button>
    </div>
  </div>
);

/* ---------- status bar ---------- */

const StatusBar = () => (
  <footer className="relative flex items-center h-8 pl-0.5 pr-[19px] gap-1.5 font-['Open_Sans',sans-serif]">
    <p className="grow">Preselected: Unnamed.Body.Sketch.Edge1 (-24.84 mm, -3.93 nm, 32.94 mm)</p>
    <p>Total length: 148,26 mm</p>
    <button type="button" className="flex items-center w-[90px] h-[26px] pl-px pr-0.5 gap-[5px] rounded-xs border border-[#a9a9a9] bg-linear-to-b from-[#f0f0f0] to-white">
      <svg viewBox="0 0 14 12" className="w-3.5 h-3" aria-hidden="true">
        <path d="M0 0H14V12H0Z" fill="#3465a4" />
        <path d="M0 0H14L7 7Z" fill="#4a7ab5" />
      </svg>
      <span className="grow text-left">5</span>
      <Arrow />
    </button>
    <div className="relative flex items-center w-[90px] h-[26px] pl-2.5 rounded-xs border border-[#a9a9a9] bg-linear-to-b from-[#f0f0f0] to-white">
      <svg viewBox="0 0 18 18" className="w-[18px] h-[18px] shrink-0" stroke="#8c8c8c" strokeWidth="2.400" fill="none" aria-hidden="true">
        <path d="M4 6Q6 2 12 3M14 12Q12 16 6 15" />
        <circle cx="13.500" cy="4" r="2.700" fill="#2e3436" stroke="none" />
        <circle cx="4.500" cy="14" r="2.700" fill="#2e3436" stroke="none" />
      </svg>
      <select aria-label="Style de navigation" className="grow min-w-0 h-full appearance-none bg-transparent">
        <option>Gesture</option>
      </select>
      <span className="absolute right-0.5 pointer-events-none">
        <Arrow />
      </span>
    </div>
    <div className="relative flex items-center w-[145px] h-6 rounded-xs border border-[#a9a9a9] bg-linear-to-b from-[#f0f0f0] to-white">
      <select aria-label="Dimensions de la vue" className="w-full h-full pl-1 appearance-none bg-transparent">
        <option>154,29 mm x 100,00 mm</option>
      </select>
      <span className="absolute right-0.5 pointer-events-none">
        <Arrow />
      </span>
    </div>
    <svg viewBox="0 0 12 12" className="absolute right-0 bottom-0 w-3 h-3" fill="#a0a0a0" aria-hidden="true">
      <path d="M9 0h2v2H9ZM6 3h2v2H6ZM9 3h2v2H9ZM3 6h2v2H3ZM6 6h2v2H6ZM9 6h2v2H9ZM0 9h2v2H0ZM3 9h2v2H3ZM6 9h2v2H6ZM9 9h2v2H9Z" />
    </svg>
  </footer>
);

const App = () => {
  return (
    <div className="min-h-screen flex flex-col rounded-lg overflow-hidden border border-[#a9a9a9] bg-[#efefef] text-black text-[11px] leading-4 font-['Noto_Sans',sans-serif]">
      <TitleBar />
      <MenuBar />
      <MainToolbar />
      <PartDesignToolbar />
      <main className="grow flex">
        <ModelPanel />
        <section className="grow flex flex-col">
          <View3D />
          <DocumentTabs />
        </section>
      </main>
      <StatusBar />
    </div>
  );
};

export default App;
